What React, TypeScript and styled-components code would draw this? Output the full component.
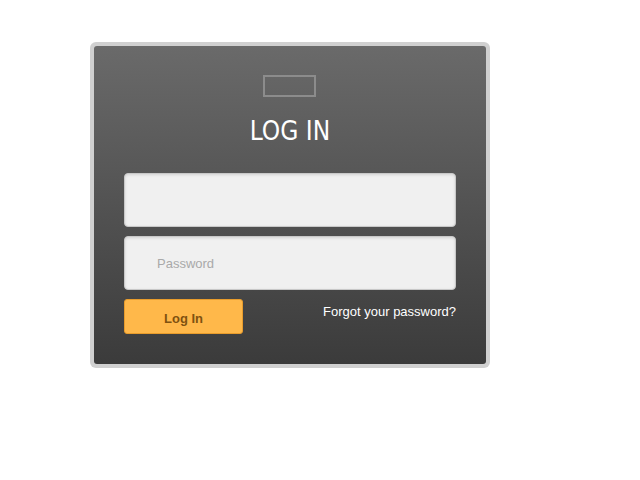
import React from 'react';
import styled, { createGlobalStyle } from 'styled-components';

const GlobalStyle = createGlobalStyle`
  html, body {
    margin: 0;
    padding: 0;
    background: #ffffff;
  }
  body {
    font-family: "Liberation Sans", Arial, sans-serif;
  }
`;

const Page = styled.div`
  width: 640px;
  height: 480px;
  padding: 42px 0 0 90px;
  box-sizing: border-box;
`;

const Frame = styled.div`
  width: 400px;
  box-sizing: border-box;
  padding: 4px;
  background: #d0d0d0;
  border-radius: 6px;
`;

const Card = styled.div`
  background: linear-gradient(to bottom, #6a6a6a, #3b3b3b);
  border-radius: 3px;
  padding: 29px 30px 30px 30px;
  display: flex;
  flex-direction: column;
  align-items: center;
`;

const Logo = styled.div`
  width: 53px;
  height: 22px;
  margin-right: 2px;
  box-sizing: border-box;
  border: 2px solid #8c8c8c;
`;

const Title = styled.h1`
  margin: 20px 0 0 0;
  font-family: "DejaVu Sans Condensed", "DejaVu Sans", sans-serif;
  font-stretch: condensed;
  font-weight: 400;
  font-size: 26px;
  line-height: 28px;
  color: #ffffff;
`;

const Form = styled.form`
  width: 100%;
  margin-top: 28px;
  display: flex;
  flex-direction: column;
  gap: 9px;
`;

const Input = styled.input`
  width: 100%;
  height: 54px;
  box-sizing: border-box;
  padding: 0 32px;
  background: #f0f0f0;
  border: 1px solid #c8c8c8;
  border-radius: 4px;
  box-shadow: inset 0 1px 3px rgba(0, 0, 0, 0.12);
  font-family: "Liberation Sans", Arial, sans-serif;
  font-size: 13px;
  color: #333;

  &::placeholder {
    color: #a9a9a9;
  }
`;

const Actions = styled.div`
  display: flex;
  justify-content: space-between;
  align-items: flex-start;
`;

const SubmitButton = styled.button`
  width: 119px;
  height: 35px;
  padding: 3px 0 0 0;
  background: #ffb84a;
  border: 1px solid #e89c2c;
  border-radius: 3px;
  font-family: "Liberation Sans", Arial, sans-serif;
  font-weight: bold;
  font-size: 13px;
  color: #7f5210;
  cursor: pointer;
`;

const Forgot = styled.a`
  margin-top: 5px;
  font-size: 13px;
  color: #ffffff;
  text-decoration: none;
  cursor: pointer;
`;

const App: React.FC = () => {
  return (
    <>
      <GlobalStyle />
      <Page>
        <Frame>
          <Card>
            <Logo />
            <Title>LOG IN</Title>
            <Form onSubmit={(e) => e.preventDefault()}>
              <Input type="text" />
              <Input type="password" placeholder="Password" />
              <Actions>
                <SubmitButton type="submit">Log In</SubmitButton>
                <Forgot>Forgot your password?</Forgot>
              </Actions>
            </Form>
          </Card>
        </Frame>
      </Page>
    </>
  );
};

export default App;
